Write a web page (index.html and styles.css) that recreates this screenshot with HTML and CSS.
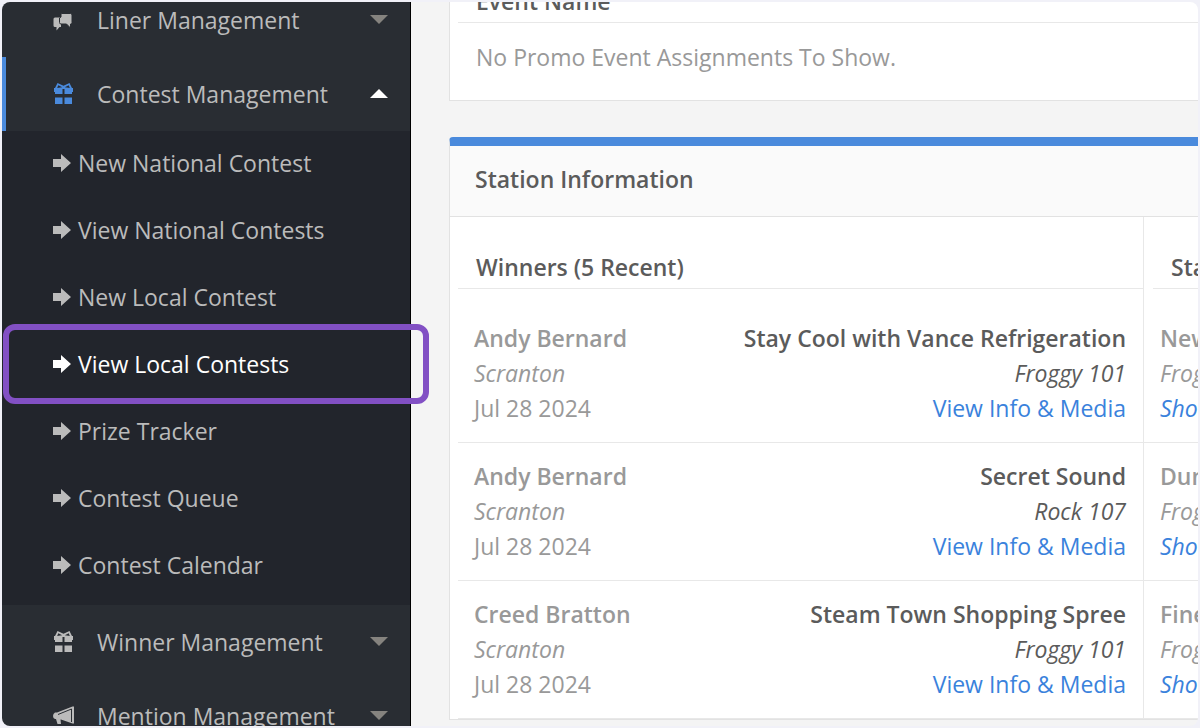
FILE: index.html
```html
<!DOCTYPE html>
<html lang="en">
<head>
  <meta charset="UTF-8">
  <meta name="viewport" content="width=device-width, initial-scale=1.0">
  <title>Contest Management</title>
  <link rel="stylesheet" href="styles.css">
</head>
<body>
  <svg class="icon-defs" aria-hidden="true">
    <symbol id="icon-chat" viewBox="0 0 22 22">
      <path d="M2 8.500h6V18H6.500L3.500 21.500V18H2Q.500 18 .500 16.500V10Q.500 8.500 2 8.500z"/>
      <path class="icon-cut" d="M9 4.500h8.500Q19 4.500 19 6v7.500Q19 15 17.500 15v4L13.500 15H8Q6.500 15 6.500 13.500V9L8 8V5.500Q8 4.500 9 4.500z"/>
    </symbol>
    <symbol id="icon-gift" viewBox="0 0 22 22">
      <path d="M2 14.500h7.500V21H2zM11.500 14.500H19V21h-7.500z"/>
      <path fill-rule="evenodd" d="M4.500 0 10.500 2.700 16.500 0 19 5h1v4h-1v2h-7.500V6h-2v5H2V9H1V5h1zM5.300 2.200 4.200 5l5-.8zM15.700 2.200 11.800 4.200l5 .8z"/>
    </symbol>
    <symbol id="icon-horn" viewBox="0 0 22 22">
      <path d="M21 1.500v17h-1.500L8 14.500h-.500l.5 4.500H4.500L3 14H2q-2-.500-2-3t2-3.500h2L19.500 1.500z"/>
      <path class="horn-line" d="M5 9.500 18.500 4v13"/>
    </symbol>
    <symbol id="icon-arrow" viewBox="0 0 20 20">
      <path d="M1 6h8V1l10 9-10 9v-5H1z"/>
    </symbol>
  </svg>

  <div class="app">
    <nav class="sidebar" aria-label="Main">
      <ul class="menu">
        <li>
          <button class="menu-item" type="button" aria-expanded="false">
            <svg class="menu-icon"><use href="#icon-chat"/></svg>
            <span class="menu-label">Liner Management</span>
            <span class="caret"></span>
          </button>
        </li>
        <li>
          <button class="menu-item open" type="button" aria-expanded="true">
            <svg class="menu-icon"><use href="#icon-gift"/></svg>
            <span class="menu-label">Contest Management</span>
            <span class="caret caret-up"></span>
          </button>
          <ul class="submenu">
            <li><a href="#"><svg class="arrow"><use href="#icon-arrow"/></svg>New National Contest</a></li>
            <li><a href="#"><svg class="arrow"><use href="#icon-arrow"/></svg>View National Contests</a></li>
            <li><a href="#"><svg class="arrow"><use href="#icon-arrow"/></svg>New Local Contest</a></li>
            <li><a class="active" href="#"><svg class="arrow"><use href="#icon-arrow"/></svg>View Local Contests</a></li>
            <li><a href="#"><svg class="arrow"><use href="#icon-arrow"/></svg>Prize Tracker</a></li>
            <li><a href="#"><svg class="arrow"><use href="#icon-arrow"/></svg>Contest Queue</a></li>
            <li><a href="#"><svg class="arrow"><use href="#icon-arrow"/></svg>Contest Calendar</a></li>
          </ul>
        </li>
        <li>
          <button class="menu-item" type="button" aria-expanded="false">
            <svg class="menu-icon"><use href="#icon-gift"/></svg>
            <span class="menu-label">Winner Management</span>
            <span class="caret"></span>
          </button>
        </li>
        <li>
          <button class="menu-item" type="button" aria-expanded="false">
            <svg class="menu-icon"><use href="#icon-horn"/></svg>
            <span class="menu-label">Mention Management</span>
            <span class="caret"></span>
          </button>
        </li>
      </ul>
    </nav>

    <main class="content">
      <section class="panel events">
        <h3 class="list-title">Event Name</h3>
        <p class="empty">No Promo Event Assignments To Show.</p>
      </section>

      <section class="panel station">
        <h2 class="panel-title">Station Information</h2>
        <div class="columns">
          <div class="column winners">
            <h3 class="list-title" id="winners-title">Winners (5 Recent)</h3>
            <table aria-labelledby="winners-title">
              <tr>
                <td><b>Andy Bernard</b><br><i>Scranton</i><br>Jul 28 2024</td>
                <td class="prize"><b>Stay Cool with Vance Refrigeration</b><br><i>Froggy 101</i><br><a href="#">View Info &amp; Media</a></td>
              </tr>
              <tr>
                <td><b>Andy Bernard</b><br><i>Scranton</i><br>Jul 28 2024</td>
                <td class="prize"><b>Secret Sound</b><br><i>Rock 107</i><br><a href="#">View Info &amp; Media</a></td>
              </tr>
              <tr>
                <td><b>Creed Bratton</b><br><i>Scranton</i><br>Jul 28 2024</td>
                <td class="prize"><b>Steam Town Shopping Spree</b><br><i>Froggy 101</i><br><a href="#">View Info &amp; Media</a></td>
              </tr>
            </table>
          </div>
          <div class="column shows">
            <h3 class="list-title" id="shows-title">Sta</h3>
            <table aria-labelledby="shows-title">
              <tr><td><b>New</b><br><i>Frog</i><br><a href="#"><i>Sho</i></a></td></tr>
              <tr><td><b>Dun</b><br><i>Frog</i><br><a href="#"><i>Sho</i></a></td></tr>
              <tr><td><b>Fine</b><br><i>Frog</i><br><a href="#"><i>Sho</i></a></td></tr>
            </table>
          </div>
        </div>
      </section>
    </main>
  </div>
</body>
</html>
```
FILE: styles.css
```css
* {
  box-sizing: border-box;
}
body {
  margin: 0;
  padding: 2px;
  background: #f1f1f8;
  color: #999;
  font-family: "Open Sans", sans-serif;
  font-size: 23px;
  line-height: 34px;
}
ul {
  list-style: none;
  margin: 0;
  padding: 0;
}
a {
  color: #3a82dc;
  text-decoration: none;
}
b, h2, h3 {
  font-weight: 600;
}
.icon-defs {
  display: none;
}
.app {
  display: flex;
  height: calc(100vh - 4px);
  overflow: hidden;
  border-radius: 8px;
  background: #f4f4f4;
}

/* sidebar */
.sidebar {
  flex: 0 0 409px;
  position: relative;
  z-index: 1;
  background: #292d33;
  border-right: 1px solid #000;
}
.menu {
  margin-top: -19px;
}
.menu-item {
  display: flex;
  align-items: center;
  width: 100%;
  height: 74px;
  padding: 0 22px 1px 47px;
  border: 0;
  border-left: 4px solid transparent;
  background: none;
  color: #bbb;
  font: inherit;
  text-align: left;
}
.menu-item.open {
  border-left-color: #4a8adc;
}
.menu-icon {
  width: 22px;
  height: 22px;
  margin-right: 22px;
  fill: currentColor;
}
.open .menu-icon {
  color: #4a8adc;
}
.icon-cut {
  stroke: #292d33;
}
.horn-line {
  fill: none;
  stroke: #292d33;
}
.menu-label {
  flex: 1;
}
.caret {
  border: 9px solid transparent;
  border-top-color: #85837f;
  border-bottom: 0;
}
.caret-up {
  border-top: 0;
  border-bottom: 9px solid #fff;
}
.submenu {
  padding-bottom: 5px;
  background: #22252c;
}
.submenu a {
  display: flex;
  align-items: center;
  position: relative;
  height: 67px;
  padding: 0 0 3px 50px;
  color: #bbb;
}
.submenu a.active {
  color: #fff;
}
.submenu a.active::after {
  content: "";
  position: absolute;
  top: -8px;
  right: -19px;
  bottom: -5px;
  left: 1px;
  border: 6px solid #8250c4;
  border-radius: 12px;
}
.arrow {
  width: 20px;
  height: 20px;
  margin-right: 6px;
  fill: currentColor;
}

/* panels */
.content {
  flex: 1;
  min-width: 0;
  padding-left: 38px;
}
.panel {
  border: 1px solid #e2e2e2;
  border-right: 0;
  background: #fff;
  white-space: nowrap;
}
.list-title {
  margin: 0;
  padding: 0 18px 4px;
  border-bottom: 1px solid #e8e8e8;
  color: #5b5b5b;
  font-size: 23px;
}
.events {
  margin: -19px 0 36px;
  padding-left: 8px;
}
.empty {
  margin: 0;
  padding: 17px 18px 26px;
}
.station {
  border-top: 9px solid #4a8adc;
  border-top-left-radius: 4px;
}
.panel-title {
  margin: 0;
  padding: 16px 25px 20px;
  border-bottom: 1px solid #e2e2e2;
  background: #fafafa;
  color: #5b5b5b;
  font-size: 23px;
}
.columns {
  display: grid;
  grid-template-columns: 1fr 54px;
}
.column {
  padding-top: 33px;
  overflow: hidden;
}
.winners {
  padding-left: 8px;
  border-right: 1px solid #e8e8e8;
}
.shows .list-title {
  margin-left: 9px;
}
table {
  width: 100%;
  margin-top: 16px;
  border-collapse: collapse;
  line-height: 35px;
}
td {
  padding: 16px;
  border-bottom: 1px solid #e8e8e8;
  vertical-align: top;
}
.prize {
  padding-right: 17px;
  text-align: right;
  color: #5b5b5b;
}
```
